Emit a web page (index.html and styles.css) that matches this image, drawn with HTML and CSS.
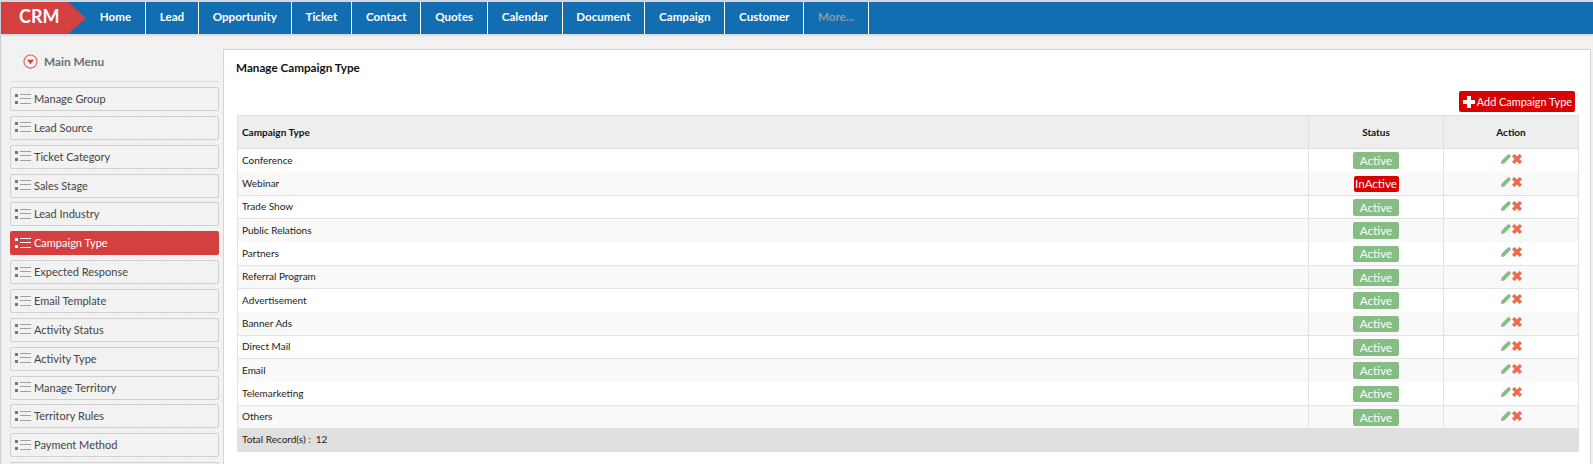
FILE: index.html
```html
<!DOCTYPE html>
<html>
<head>
  <meta charset="utf-8">
  <title>Manage Campaign Type</title>
  <link rel="stylesheet" href="styles.css">
</head>
<body>
  <svg class="defs" width="0" height="0">
    <symbol id="i-list" viewBox="0 0 16 12">
      <rect x="0" y="1" width="3" height="3" fill="currentColor"/>
      <rect x="0" y="8" width="3" height="3" fill="currentColor"/>
      <rect x="5" y="1" width="11" height="1"/>
      <rect x="5" y="5" width="11" height="1"/>
      <rect x="5" y="10" width="11" height="1"/>
    </symbol>
    <symbol id="i-pencil" viewBox="0 0 10 10">
      <path d="M0 10 L0.5 6.8 L6.8 0.6 Q7.8 -0.2 8.8 0.6 L9.4 1.2 Q10.2 2.2 9.3 3.2 L3.2 9.4 Z" fill="#85bd83"/>
    </symbol>
    <symbol id="i-cross" viewBox="0 0 10 10">
      <path d="M2.3 0 L5 2.6 L7.7 0 L10 2.3 L7.4 5 L10 7.7 L7.7 10 L5 7.4 L2.3 10 L0 7.7 L2.6 5 L0 2.3 Z" fill="#f0694c"/>
    </symbol>
  </svg>

  <nav class="topbar">
    <a class="brand" href="#">CRM</a>
    <ul class="topmenu">
      <li><a href="#">Home</a></li>
      <li><a href="#">Lead</a></li>
      <li><a href="#">Opportunity</a></li>
      <li><a href="#">Ticket</a></li>
      <li><a href="#">Contact</a></li>
      <li><a href="#">Quotes</a></li>
      <li><a href="#">Calendar</a></li>
      <li><a href="#">Document</a></li>
      <li><a href="#">Campaign</a></li>
      <li><a href="#">Customer</a></li>
      <li><a class="more" href="#">More...</a></li>
    </ul>
  </nav>

  <div class="wrap">
    <aside class="sidebar">
      <div class="side-title">
        <svg class="side-arrow" viewBox="0 0 16 16" width="15" height="15">
          <circle cx="8" cy="8" r="7" fill="none" stroke="#e0605f" stroke-width="1.2"/>
          <path d="M4.2 6.2 H11.8 L8 10.8 Z" fill="#d64040"/>
        </svg>
        <span>Main Menu</span>
      </div>
      <ul class="side-menu">
        <li><a href="#"><svg class="list-icon"><use href="#i-list"/></svg>Manage Group</a></li>
        <li><a href="#"><svg class="list-icon"><use href="#i-list"/></svg>Lead Source</a></li>
        <li><a href="#"><svg class="list-icon"><use href="#i-list"/></svg>Ticket Category</a></li>
        <li><a href="#"><svg class="list-icon"><use href="#i-list"/></svg>Sales Stage</a></li>
        <li><a href="#"><svg class="list-icon"><use href="#i-list"/></svg>Lead Industry</a></li>
        <li><a class="active" href="#"><svg class="list-icon"><use href="#i-list"/></svg>Campaign Type</a></li>
        <li><a href="#"><svg class="list-icon"><use href="#i-list"/></svg>Expected Response</a></li>
        <li><a href="#"><svg class="list-icon"><use href="#i-list"/></svg>Email Template</a></li>
        <li><a href="#"><svg class="list-icon"><use href="#i-list"/></svg>Activity Status</a></li>
        <li><a href="#"><svg class="list-icon"><use href="#i-list"/></svg>Activity Type</a></li>
        <li><a href="#"><svg class="list-icon"><use href="#i-list"/></svg>Manage Territory</a></li>
        <li><a href="#"><svg class="list-icon"><use href="#i-list"/></svg>Territory Rules</a></li>
        <li><a href="#"><svg class="list-icon"><use href="#i-list"/></svg>Payment Method</a></li>
        <li><a href="#"></a></li>
      </ul>
    </aside>

    <main class="panel">
      <h1 class="panel-title">Manage Campaign Type</h1>
      <div class="toolbar">
        <a class="btn-add" href="#"><span class="plus"></span>Add Campaign Type</a>
      </div>
      <table class="grid">
        <thead>
          <tr>
            <th class="col-name">Campaign Type</th>
            <th class="col-status">Status</th>
            <th class="col-action">Action</th>
          </tr>
        </thead>
        <tbody>
          <tr class="plain"><td>Conference</td><td class="c"><span class="badge on">Active</span></td><td class="c"><div class="acts"><svg class="ico"><use href="#i-pencil"/></svg><svg class="ico"><use href="#i-cross"/></svg></div></td></tr>
          <tr class="alt tall"><td>Webinar</td><td class="c"><span class="badge off">InActive</span></td><td class="c"><div class="acts"><svg class="ico"><use href="#i-pencil"/></svg><svg class="ico"><use href="#i-cross"/></svg></div></td></tr>
          <tr><td>Trade Show</td><td class="c"><span class="badge on">Active</span></td><td class="c"><div class="acts"><svg class="ico"><use href="#i-pencil"/></svg><svg class="ico"><use href="#i-cross"/></svg></div></td></tr>
          <tr class="alt plain"><td>Public Relations</td><td class="c"><span class="badge on">Active</span></td><td class="c"><div class="acts"><svg class="ico"><use href="#i-pencil"/></svg><svg class="ico"><use href="#i-cross"/></svg></div></td></tr>
          <tr class="tall"><td>Partners</td><td class="c"><span class="badge on">Active</span></td><td class="c"><div class="acts"><svg class="ico"><use href="#i-pencil"/></svg><svg class="ico"><use href="#i-cross"/></svg></div></td></tr>
          <tr class="alt"><td>Referral Program</td><td class="c"><span class="badge on">Active</span></td><td class="c"><div class="acts"><svg class="ico"><use href="#i-pencil"/></svg><svg class="ico"><use href="#i-cross"/></svg></div></td></tr>
          <tr class="plain"><td>Advertisement</td><td class="c"><span class="badge on">Active</span></td><td class="c"><div class="acts"><svg class="ico"><use href="#i-pencil"/></svg><svg class="ico"><use href="#i-cross"/></svg></div></td></tr>
          <tr class="alt tall"><td>Banner Ads</td><td class="c"><span class="badge on">Active</span></td><td class="c"><div class="acts"><svg class="ico"><use href="#i-pencil"/></svg><svg class="ico"><use href="#i-cross"/></svg></div></td></tr>
          <tr><td>Direct Mail</td><td class="c"><span class="badge on">Active</span></td><td class="c"><div class="acts"><svg class="ico"><use href="#i-pencil"/></svg><svg class="ico"><use href="#i-cross"/></svg></div></td></tr>
          <tr class="alt plain"><td>Email</td><td class="c"><span class="badge on">Active</span></td><td class="c"><div class="acts"><svg class="ico"><use href="#i-pencil"/></svg><svg class="ico"><use href="#i-cross"/></svg></div></td></tr>
          <tr class="tall"><td>Telemarketing</td><td class="c"><span class="badge on">Active</span></td><td class="c"><div class="acts"><svg class="ico"><use href="#i-pencil"/></svg><svg class="ico"><use href="#i-cross"/></svg></div></td></tr>
          <tr class="alt plain last"><td>Others</td><td class="c"><span class="badge on">Active</span></td><td class="c"><div class="acts"><svg class="ico"><use href="#i-pencil"/></svg><svg class="ico"><use href="#i-cross"/></svg></div></td></tr>
        </tbody>
        <tfoot>
          <tr><td colspan="3">Total Record(s) :&nbsp; 12</td></tr>
        </tfoot>
      </table>
    </main>
  </div>
</body>
</html>
```

FILE: styles.css
```css
html, body {
  margin: 0;
  height: 100%;
  overflow: hidden;
}
body {
  box-sizing: border-box;
  font-family: Lato, "Open Sans", sans-serif;
  font-size: 11px;
  color: #222;
  background-color: #f0f0f0;
  background-image:
    repeating-linear-gradient(0deg, rgba(255,255,255,.2) 0 1px, transparent 1px 3px),
    repeating-linear-gradient(90deg, rgba(255,255,255,.2) 0 1px, transparent 1px 3px);
  display: flex;
  flex-direction: column;
  border-top: 2px solid #d3d7db;
  border-left: 1px solid #c9ccd3;
}
a {
  text-decoration: none;
  color: inherit;
}
ul {
  list-style: none;
  margin: 0;
  padding: 0;
}
.defs {
  position: absolute;
}

/* top bar */
.topbar {
  display: flex;
  flex-shrink: 0;
  height: 32px;
  background-color: #126db1;
  box-shadow: 0 1px 3px #c8c8c8;
}
.brand {
  width: 67px;
  height: 32px;
  line-height: 29px;
  padding-left: 18px;
  box-sizing: border-box;
  position: relative;
  background-color: #d43f3f;
  color: #fff;
  font-size: 18px;
  font-weight: 700;
}
.brand::after {
  content: "";
  position: absolute;
  left: 67px;
  top: 0;
  border-left: 18px solid #d43f3f;
  border-top: 16px solid transparent;
  border-bottom: 16px solid transparent;
}
.topmenu {
  display: flex;
  margin-left: 18px;
}
.topmenu li {
  border-right: 1px solid #fff;
}
.topmenu a {
  display: block;
  padding: 0 13.8px;
  line-height: 30px;
  color: #fff;
  font-size: 11.6px;
  font-weight: 700;
}
.topmenu a.more {
  color: #8f9aa5;
}

/* layout */
.wrap {
  flex: 1;
  display: flex;
  min-height: 0;
  padding: 15px 2px 0 9px;
}
.sidebar {
  width: 209px;
  flex-shrink: 0;
  margin-right: 4px;
}
.side-title {
  box-sizing: border-box;
  height: 33px;
  display: flex;
  align-items: center;
  padding: 0 0 7px 13px;
  gap: 6px;
  border-bottom: 1px solid #dcdcdc;
  margin-bottom: 5px;
  color: #6a6e78;
  font-size: 11.8px;
  font-weight: 700;
}
.side-arrow {
  flex-shrink: 0;
}
.side-menu li {
  margin-bottom: 4.87px;
}
.side-menu a {
  box-sizing: border-box;
  display: flex;
  align-items: center;
  height: 24px;
  border: 1px solid #d0d0d0;
  border-radius: 2px;
  padding: 0 0 1px 4px;
  gap: 3px;
  background-color: #f2f2f2;
  color: #444;
  font-size: 11px;
}
.side-menu a.active {
  border: 0;
  padding-left: 5px;
  background-color: #d43f3f;
  color: #fff;
}
.list-icon {
  width: 16px;
  height: 12px;
  color: #777;
  fill: #a0a0a0;
}
.active .list-icon {
  color: #fff;
  fill: #fff;
}

/* main panel */
.panel {
  flex: 1;
  min-width: 0;
  background-color: #fff;
  border: 1px solid #d4d4d4;
  border-bottom: 0;
  padding: 0 11px 0 13px;
}
.panel-title {
  margin: 0 0 0 -5px;
  padding: 10px 0 0 4px;
  height: 31px;
  font-size: 11.7px;
  line-height: 15px;
  font-weight: 700;
  color: #111;
}
.toolbar {
  display: flex;
  justify-content: flex-end;
  padding-right: 4px;
  height: 24px;
}
.btn-add {
  display: flex;
  align-items: center;
  height: 21px;
  padding: 0 3px 0 4px;
  gap: 2px;
  border-radius: 2px;
  background-color: #d90000;
  color: #fff;
  font-size: 10.9px;
}
.plus {
  width: 12px;
  height: 12px;
  background:
    linear-gradient(#fff, #fff) center / 12px 4px no-repeat,
    linear-gradient(#fff, #fff) center / 4px 12px no-repeat;
}

/* table */
.grid {
  width: 100%;
  table-layout: fixed;
  border-collapse: separate;
  border-spacing: 0;
  font-size: 10px;
  color: #222;
}
.grid th {
  box-sizing: border-box;
  height: 34px;
  padding: 0;
  background-color: #eee;
  border: 1px solid #e0e0e0;
  border-left-width: 0;
  font-weight: 700;
  color: #111;
  text-align: center;
}
.grid th.col-name {
  text-align: left;
  padding-left: 4px;
  border-left-width: 1px;
}
.col-status,
.col-action {
  width: 135px;
}
.grid td {
  box-sizing: border-box;
  height: 23px;
  padding: 0;
  border-right: 1px solid #e2e2e2;
  border-bottom: 1px solid #e2e2e2;
}
.grid td:first-child {
  padding: 0 0 2px 4px;
  border-left: 1px solid #e2e2e2;
}
.grid td.c {
  text-align: center;
}
.grid tr.plain td {
  border-bottom: 0;
}
.grid tr.tall td {
  height: 24px;
}
.grid tr.last td {
  height: 22px;
}
.alt td {
  background-color: #f9f9f9;
}
.badge {
  display: block;
  height: 17px;
  line-height: 17px;
  margin: 0 auto;
  border-radius: 2px;
  color: #fff;
  font-size: 11.6px;
}
.tall .badge {
  height: 16px;
  line-height: 16px;
}
.badge.on {
  width: 46px;
  background-color: #85bd83;
}
.badge.off {
  width: 45px;
  background-color: #d90000;
}
.acts {
  display: flex;
  justify-content: center;
  gap: 1px;
  margin-bottom: 3px;
}
.ico {
  width: 10px;
  height: 10px;
}
.grid tfoot td {
  height: 24px;
  background-color: #e0e0e0;
  border: 0;
  padding: 0 0 2px 4px;
}
```
